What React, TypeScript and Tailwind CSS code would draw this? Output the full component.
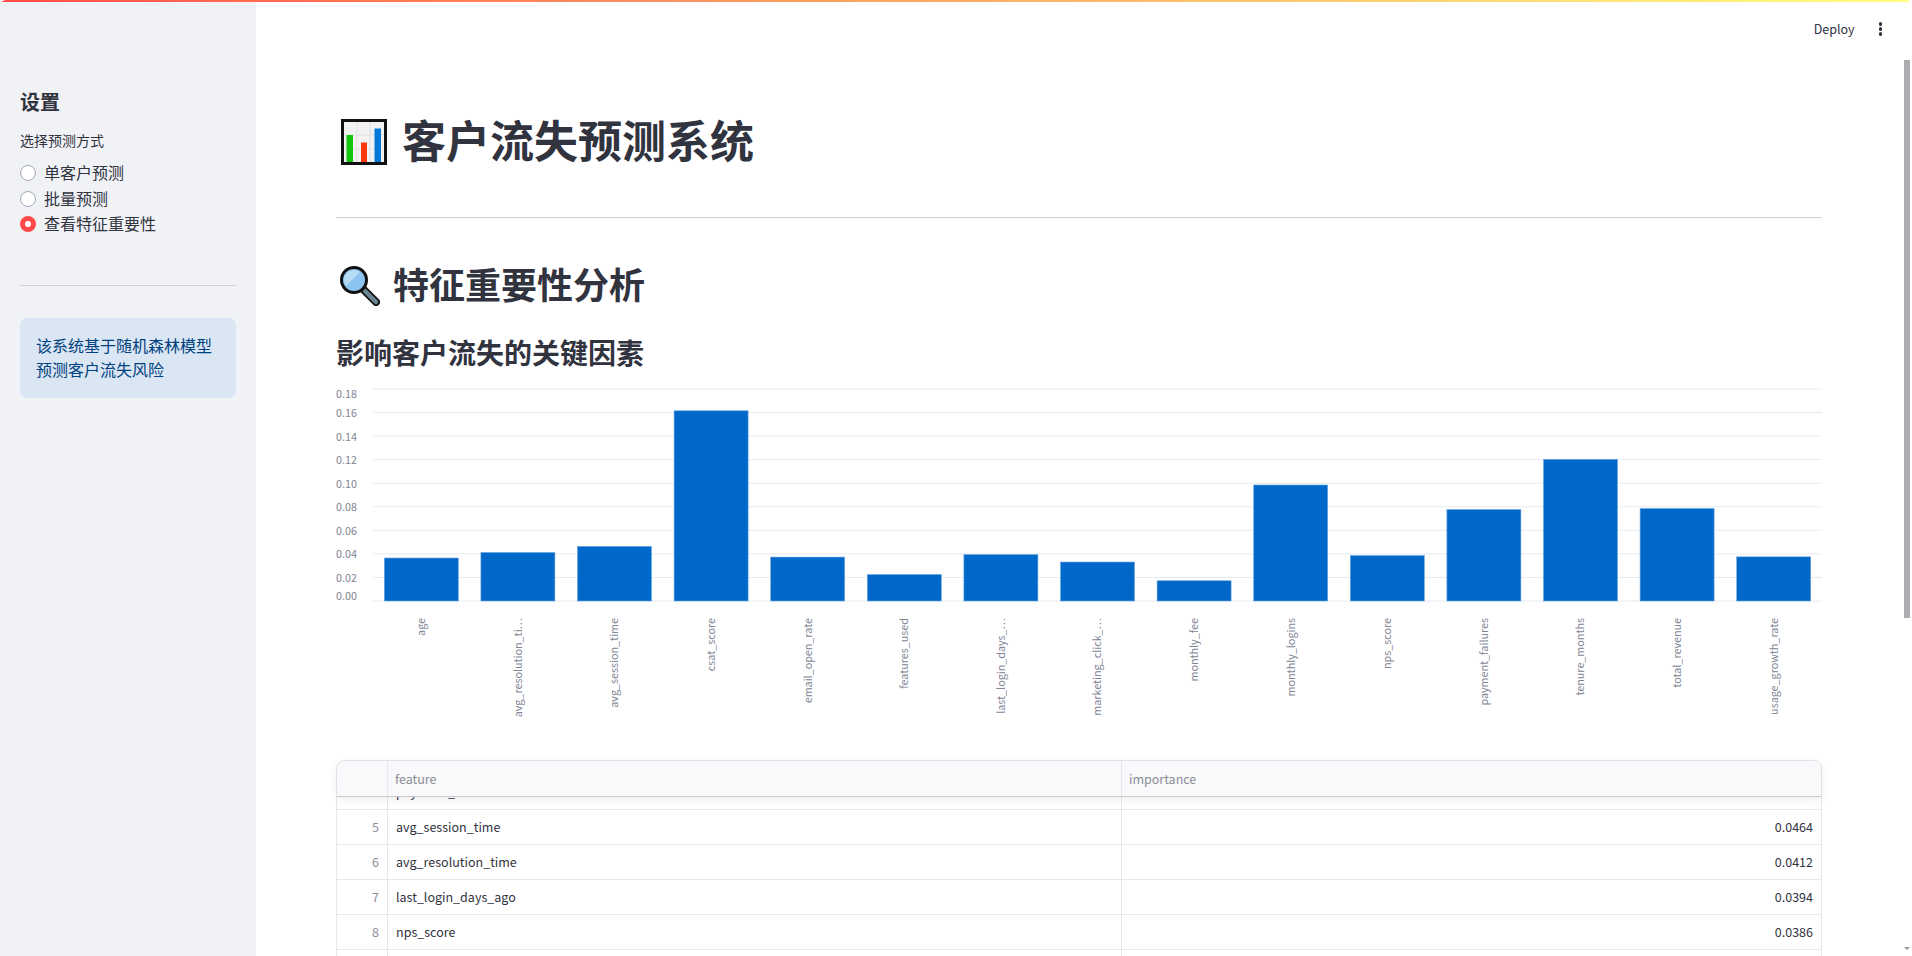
const features = [
  { name: 'age', label: 'age', value: 0.0365 },
  { name: 'avg_resolution_time', label: 'avg_resolution_ti…', value: 0.0412 },
  { name: 'avg_session_time', label: 'avg_session_time', value: 0.0464 },
  { name: 'csat_score', label: 'csat_score', value: 0.1615 },
  { name: 'email_open_rate', label: 'email_open_rate', value: 0.0373 },
  { name: 'features_used', label: 'features_used', value: 0.0225 },
  { name: 'last_login_days_ago', label: 'last_login_days_…', value: 0.0394 },
  { name: 'marketing_click_rate', label: 'marketing_click_…', value: 0.0331 },
  { name: 'monthly_fee', label: 'monthly_fee', value: 0.0172 },
  { name: 'monthly_logins', label: 'monthly_logins', value: 0.0985 },
  { name: 'nps_score', label: 'nps_score', value: 0.0386 },
  { name: 'payment_failures', label: 'payment_failures', value: 0.0776 },
  { name: 'tenure_months', label: 'tenure_months', value: 0.1203 },
  { name: 'total_revenue', label: 'total_revenue', value: 0.0785 },
  { name: 'usage_growth_rate', label: 'usage_growth_rate', value: 0.0375 },
];

const yTicks = [
  { label: '0.18', v: 0.18, y: 15.5 },
  { label: '0.16', v: 0.16, y: 34.5 },
  { label: '0.14', v: 0.14, y: 58.5 },
  { label: '0.12', v: 0.12, y: 81.5 },
  { label: '0.10', v: 0.1, y: 105.5 },
  { label: '0.08', v: 0.08, y: 128.5 },
  { label: '0.06', v: 0.06, y: 152.5 },
  { label: '0.04', v: 0.04, y: 175.5 },
  { label: '0.02', v: 0.02, y: 199.5 },
  { label: '0.00', v: 0, y: 217.5 },
];

const tableRows = [
  { i: 4, name: 'payment_failures', value: '0.0776' },
  { i: 5, name: 'avg_session_time', value: '0.0464' },
  { i: 6, name: 'avg_resolution_time', value: '0.0412' },
  { i: 7, name: 'last_login_days_ago', value: '0.0394' },
  { i: 8, name: 'nps_score', value: '0.0386' },
  { i: 9, name: 'usage_growth_rate', value: '0.0375' },
];

function ChartEmoji() {
  return (
    <svg width="46" height="46" viewBox="0 0 46 46" className="shrink-0 ml-[5px] mt-[5px]">
      <rect x="1.5" y="1.5" width="43" height="43" fill="#f2f2f2" stroke="#111" strokeWidth="3" />
      <path d="M16 3v40M29 3v40M3 16h40M3 30h40" stroke="#e2e2e2" strokeWidth="1" />
      <rect x="5.5" y="16" width="6.5" height="27" fill="#16c60c" />
      <rect x="20" y="23.5" width="6" height="19.5" fill="#f7380f" />
      <rect x="33.5" y="9.5" width="6.5" height="33.5" fill="#0078d7" />
    </svg>
  );
}

function SearchEmoji() {
  return (
    <svg width="40" height="40" viewBox="0 0 40 40" className="shrink-0 ml-1 mt-[6px]">
      <path d="M24 24l12 12" stroke="#111" strokeWidth="8" strokeLinecap="round" />
      <path d="M25 25l11 11" stroke="#6d8591" strokeWidth="4.5" strokeLinecap="round" />
      <circle cx="14" cy="14" r="12.5" fill="#8cc4ef" stroke="#111" strokeWidth="3" />
      <path d="M4 14a10 10 0 0 1 16-8L6 20a10 10 0 0 1-2-6z" fill="#b5dbf5" />
    </svg>
  );
}

function Radio({ label, checked }: { label: string; checked?: boolean }) {
  return (
    <div className="flex items-center h-[25.5px]">
      {checked ? (
        <span className="w-4 h-4 translate-y-px rounded-full bg-[#ff4b4b] flex items-center justify-center shrink-0">
          <span className="w-1.5 h-1.5 rounded-full bg-white" />
        </span>
      ) : (
        <span className="w-4 h-4 translate-y-px rounded-full bg-white border border-[#a3a8b4] shrink-0" />
      )}
      <span className="ml-2 text-base text-[#31333f]">{label}</span>
    </div>
  );
}

function Chart() {
  const base = 221;
  const scale = 1177.8;
  const step = 1449 / 15;
  return (
    <svg width="1486" height="360" viewBox="0 0 1486 360" className="block">
      {yTicks.map(t => (
        <g key={t.label}>
          <line x1="37" x2="1486" y1={base - t.v * scale} y2={base - t.v * scale} stroke="#e6eaf1" strokeWidth="1" />
          <text x="21" y={t.y} textAnchor="end" dominantBaseline="middle" fontSize="10.75" fill="#808495">
            {t.label}
          </text>
        </g>
      ))}
      {features.map((f, i) => {
        const h = f.value * scale;
        const cx = 37 + step * i + step / 2;
        return (
          <g key={f.name}>
            <rect x={cx - 37} y={base - h} width="74" height={h} fill="#0068c9" stroke="#6aa6e2" strokeWidth="0.6" />
            <text
              transform={`translate(${cx + 1},238) rotate(-90)`}
              textAnchor="end"
              dominantBaseline="middle"
              fontSize="10.75"
              fill="#808495"
            >
              {f.label}
            </text>
          </g>
        );
      })}
    </svg>
  );
}

function FeatureTable() {
  return (
    <div className="mt-5 border border-[#e6e8ec] rounded-t-lg text-[12.5px]">
      <div className="relative z-10 grid grid-cols-[51px_734px_1fr] h-[36px] bg-[#f8f9fb] rounded-t-lg border-b border-[#c8cacf] shadow-[0_2px_8px_rgba(0,0,0,0.08)] text-[#8b8d96]">
        <div className="border-r border-[#e6e8ec]" />
        <div className="border-r border-[#e6e8ec] pl-[7px] leading-[35px]">feature</div>
        <div className="pl-[7px] leading-[35px]">importance</div>
      </div>
      <div className="overflow-hidden">
        <div className="-mt-[22px]">
          {tableRows.map(r => (
            <div key={r.i} className="grid grid-cols-[51px_734px_1fr] h-[35px] border-b border-[#e8e9ec] leading-[34px] text-[#31333f]">
              <div className="border-r border-[#e6e8ec] pr-2 text-right text-[#8b8d96]">{r.i}</div>
              <div className="border-r border-[#e6e8ec] px-2">{r.name}</div>
              <div className="px-2 text-right">{r.value}</div>
            </div>
          ))}
        </div>
      </div>
    </div>
  );
}

export default function App() {
  return (
    <div className="h-screen w-full overflow-hidden flex flex-col bg-white rounded-t-md text-[#31333f] font-['Noto_Sans_CJK_SC',sans-serif]">
      <div className="h-0.5 shrink-0 bg-gradient-to-r from-[#ff4b4b] to-[#fffd80]" />
      <div className="flex flex-1 min-h-0">
        <aside className="w-64 shrink-0 bg-[#f0f2f6] px-5 pt-[85px]">
          <h2 className="text-xl font-bold leading-[30px]">设置</h2>
          <div className="mt-[13px] text-sm leading-5">选择预测方式</div>
          <div className="mt-[9.5px]">
            <Radio label="单客户预测" />
            <Radio label="批量预测" />
            <Radio label="查看特征重要性" checked />
          </div>
          <hr className="mt-[49px] border-[#cdcfd5]" />
          <div className="mt-8 h-20 rounded-lg bg-[#dae6f4] px-4 py-[15px] text-base leading-6 text-[#004280]">
            该系统基于随机森林模型预测客户流失风险
          </div>
        </aside>
        <main className="relative flex-1 min-w-0 overflow-hidden pl-20 pr-[90px]">
          <header className="h-[54px] -mr-[90px] pr-[30px] flex items-center justify-end">
            <span className="text-[12.5px] text-[#31333f]">Deploy</span>
            <span className="ml-[24px] flex flex-col gap-[1.5px]">
              <span className="w-[3.5px] h-[3.5px] rounded-full bg-[#31333f]" />
              <span className="w-[3.5px] h-[3.5px] rounded-full bg-[#31333f]" />
              <span className="w-[3.5px] h-[3.5px] rounded-full bg-[#31333f]" />
            </span>
          </header>
          <h1 className="mt-[57px] flex items-center gap-[15px] h-[52px] text-[44px] font-bold leading-[52px]">
            <ChartEmoji />
            <span>客户流失预测系统</span>
          </h1>
          <hr className="mt-[52px] border-[#d0d1d5]" />
          <h2 className="mt-[41px] flex items-center gap-[13px] h-12 text-4xl font-bold leading-[48px]">
            <SearchEmoji />
            <span>特征重要性分析</span>
          </h2>
          <h3 className="mt-[25px] text-[28px] font-bold leading-10">影响客户流失的关键因素</h3>
          <div className="mt-[8px]">
            <Chart />
          </div>
          <FeatureTable />
          <div className="absolute right-0.5 top-[58px] h-[558px] w-1.5 bg-[#adadb1]" />
          <div className="absolute right-0.5 bottom-[6px] w-0 h-0 border-x-[3.5px] border-x-transparent border-t-[3px] border-t-[#9a9a9a]" />
        </main>
      </div>
    </div>
  );
}
